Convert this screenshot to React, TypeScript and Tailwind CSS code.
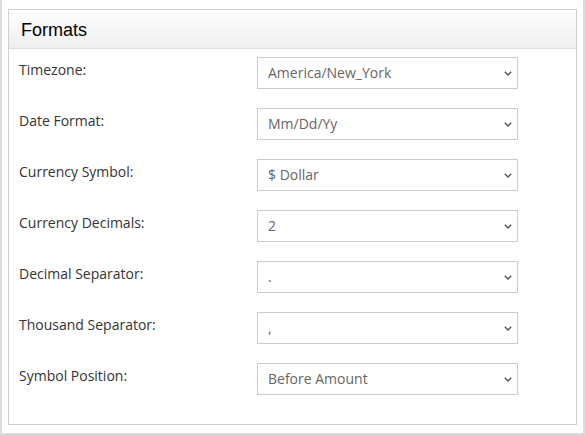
import React from 'react';

const rows = [
  { label: 'Timezone:', value: 'America/New_York' },
  { label: 'Date Format:', value: 'Mm/Dd/Yy' },
  { label: 'Currency Symbol:', value: '$ Dollar' },
  { label: 'Currency Decimals:', value: '2' },
  { label: 'Decimal Separator:', value: '.' },
  { label: 'Thousand Separator:', value: ',' },
  { label: 'Symbol Position:', value: 'Before Amount' },
];

const Chevron = () => (
  <svg width="10" height="7" viewBox="0 0 10 7" className="shrink-0">
    <path d="M1.8 1.8 L5 5 L8.2 1.8" fill="none" stroke="#555" strokeWidth="1.5" />
  </svg>
);

export default function App() {
  return (
    <div className="w-[585px] h-[435px] bg-white border-x-2 border-b-2 border-[#dcdcdc] pl-[6px] pr-[6px] pt-[9px] pb-[8px] font-['Open_Sans',sans-serif]">
      <div className="border border-[#cfcfcf] h-full bg-white">
        {/* Header */}
        <div className="h-[39px] bg-gradient-to-b from-white to-[#eeeeee] border-b border-[#dddddd] px-[12px] flex items-center">
          <h2 className="text-[18px] text-black font-['Liberation_Sans',Arial,sans-serif] leading-none pt-[1px]">Formats</h2>
        </div>

        {/* Fields */}
        <div className="px-[10px] pt-[8px] flex flex-col gap-[19px]">
          {rows.map((row) => (
            <div key={row.label} className="flex items-start">
              <label className="w-[238px] text-[14px] text-[#333] pt-[4px] leading-[18px]">{row.label}</label>
              <div className="w-[261px] h-[32px] border border-[#cccccc] bg-white flex items-center justify-between pl-[10px] pr-[4px]">
                <span className="text-[14px] text-[#666] leading-none">{row.value}</span>
                <Chevron />
              </div>
            </div>
          ))}
        </div>
      </div>
    </div>
  );
}
